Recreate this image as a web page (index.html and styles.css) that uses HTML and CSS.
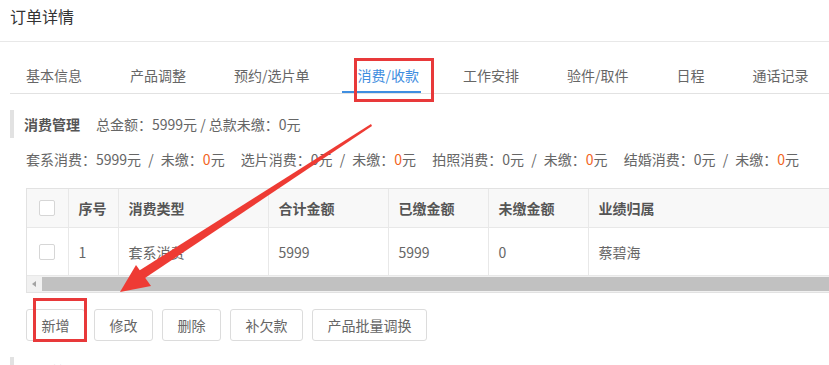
FILE: index.html
```html
<!DOCTYPE html>
<html lang="zh-CN">

<head>
    <meta charset="UTF-8">
    <meta name="viewport" content="width=device-width, initial-scale=1.0">
    <title>订单详情</title>
    <link rel="stylesheet" href="styles.css">
</head>

<body>
    <div class="page-title">订单详情</div>

    <ul class="tabs">
        <li>基本信息</li>
        <li>产品调整</li>
        <li>预约/选片单</li>
        <li class="active">消费/收款</li>
        <li>工作安排</li>
        <li>验件/取件</li>
        <li>日程</li>
        <li>通话记录</li>
    </ul>

    <div class="section">
        <div class="section-head">
            <span class="section-name">消费管理</span>
            <span class="section-sum">总金额：5999元 / 总款未缴：0元</span>
        </div>

        <div class="summary">
            <span class="item">套系消费：5999元 <i>/</i> 未缴：<b>0</b>元</span>
            <span class="item">选片消费：0元 <i>/</i> 未缴：<b>0</b>元</span>
            <span class="item">拍照消费：0元 <i>/</i> 未缴：<b>0</b>元</span>
            <span class="item">结婚消费：0元 <i>/</i> 未缴：<b>0</b>元</span>
        </div>

        <div class="table-box">
            <table class="grid">
                <colgroup>
                    <col style="width: 41px">
                    <col style="width: 50px">
                    <col style="width: 150px">
                    <col style="width: 120px">
                    <col style="width: 100px">
                    <col style="width: 100px">
                    <col style="width: 300px">
                </colgroup>
                <thead>
                    <tr>
                        <th class="check-cell"><span class="check"></span></th>
                        <th>序号</th>
                        <th>消费类型</th>
                        <th>合计金额</th>
                        <th>已缴金额</th>
                        <th>未缴金额</th>
                        <th>业绩归属</th>
                    </tr>
                </thead>
                <tbody>
                    <tr>
                        <td class="check-cell"><span class="check"></span></td>
                        <td>1</td>
                        <td>套系消费</td>
                        <td>5999</td>
                        <td>5999</td>
                        <td>0</td>
                        <td>蔡碧海</td>
                    </tr>
                </tbody>
            </table>
            <div class="scrollbar">
                <span class="scroll-arrow"></span>
                <span class="scroll-thumb"></span>
            </div>
        </div>

        <div class="actions">
            <button>新增</button>
            <button>修改</button>
            <button>删除</button>
            <button>补欠款</button>
            <button>产品批量调换</button>
        </div>
    </div>

    <div class="section">
        <div class="section-head">
            <span class="section-name">收款管理</span>
        </div>
    </div>

    <!-- annotation marks drawn over the page -->
    <div class="mark mark-tab"></div>
    <div class="mark mark-btn"></div>
    <svg class="arrow" width="829" height="365" viewBox="0 0 829 365">
        <polygon points="371,124 372,126 142,280 137,272" fill="#ee3b34" />
        <polygon points="120,292 136,265 151,286" fill="#ee3b34" />
    </svg>
</body>

</html>
```

FILE: styles.css
```css
body {
    font-family: "Noto Sans CJK SC", "Noto Sans", Arial, sans-serif;
    font-size: 14px;
    margin: 0;
    padding: 0;
    color: #666;
    background: #fff;
    overflow: hidden;
    position: relative;
    height: 365px;
}

.page-title {
    height: 41px;
    line-height: 32px;
    padding-left: 10px;
    font-size: 16px;
    color: #333;
    border-bottom: 1px solid #e8e8e8;
}

.tabs {
    list-style-type: none;
    display: flex;
    margin: 15px 0 0 10px;
    padding: 0;
    border-bottom: 1px solid #e2e2e2;
}

.tabs li {
    height: 36px;
    line-height: 36px;
    padding: 0 16px;
    margin-right: 16px;
    white-space: nowrap;
    color: #666;
}

.tabs li.active {
    color: #3f8ee0;
    box-shadow: inset 0 -2px 0 #3f8ee0;
    padding-right: 2px;
    margin-right: 26px;
}

.section {
    padding: 16px 0 0 10px;
}

.section-head {
    display: flex;
    align-items: center;
    height: 28px;
    border-left: 4px solid #e2e2e2;
    padding-left: 10px;
}

.section-name {
    font-weight: bold;
    color: #555;
    margin-right: 16px;
}

.section-sum {
    color: #666;
}

.summary {
    margin: 10px 0 0 16px;
    height: 22px;
    line-height: 22px;
    white-space: nowrap;
}

.summary .item {
    margin-right: 13px;
}

.summary i {
    font-style: normal;
    padding: 0 4px;
}

.summary b {
    font-weight: normal;
    color: #f2641e;
}

.table-box {
    margin: 18px 0 0 16px;
    width: 820px;
    border: 1px solid #e2e2e2;
    border-right: none;
}

.grid {
    border-collapse: collapse;
    table-layout: fixed;
    width: 861px;
}

.grid th,
.grid td {
    text-align: left;
    padding: 0 10px;
    border-left: 1px solid #e8e8e8;
    white-space: nowrap;
}

.grid th:first-child,
.grid td:first-child {
    border-left: none;
}

.grid th {
    height: 38px;
    background: #f8f8f8;
    color: #555;
    font-weight: bold;
    border-bottom: 1px solid #e8e8e8;
}

.grid td {
    height: 47px;
    color: #666;
}

.grid .check-cell {
    padding: 0 0 0 12px;
}

.check {
    display: block;
    width: 14px;
    height: 14px;
    border: 1px solid #d6d6d6;
    border-radius: 2px;
    background: #fff;
}

.scrollbar {
    display: flex;
    align-items: center;
    height: 16px;
    background: #f1f1f1;
    border-top: 1px solid #e8e8e8;
}

.scroll-arrow {
    width: 0;
    height: 0;
    margin: 0 6px 0 5px;
    border-top: 3px solid transparent;
    border-bottom: 3px solid transparent;
    border-right: 4px solid #a3a3a3;
}

.scroll-thumb {
    flex: 1;
    height: 14px;
    background: #c1c1c1;
}

.actions {
    display: flex;
    gap: 9px;
    margin: 16px 0 0 16px;
}

.actions button {
    font-family: inherit;
    font-size: 14px;
    height: 32px;
    padding: 0 14.5px;
    color: #666;
    background: #fff;
    border: 1px solid #dcdcdc;
    border-radius: 3px;
    cursor: pointer;
}

.actions button:hover {
    border-color: #3f8ee0;
}

.mark {
    position: absolute;
    border: 3px solid #e8393a;
    box-sizing: border-box;
}

.mark-tab {
    left: 354px;
    top: 58px;
    width: 80px;
    height: 44px;
}

.mark-btn {
    left: 33px;
    top: 298px;
    width: 54px;
    height: 44px;
}

.arrow {
    position: absolute;
    left: 0;
    top: 0;
    pointer-events: none;
}
```
